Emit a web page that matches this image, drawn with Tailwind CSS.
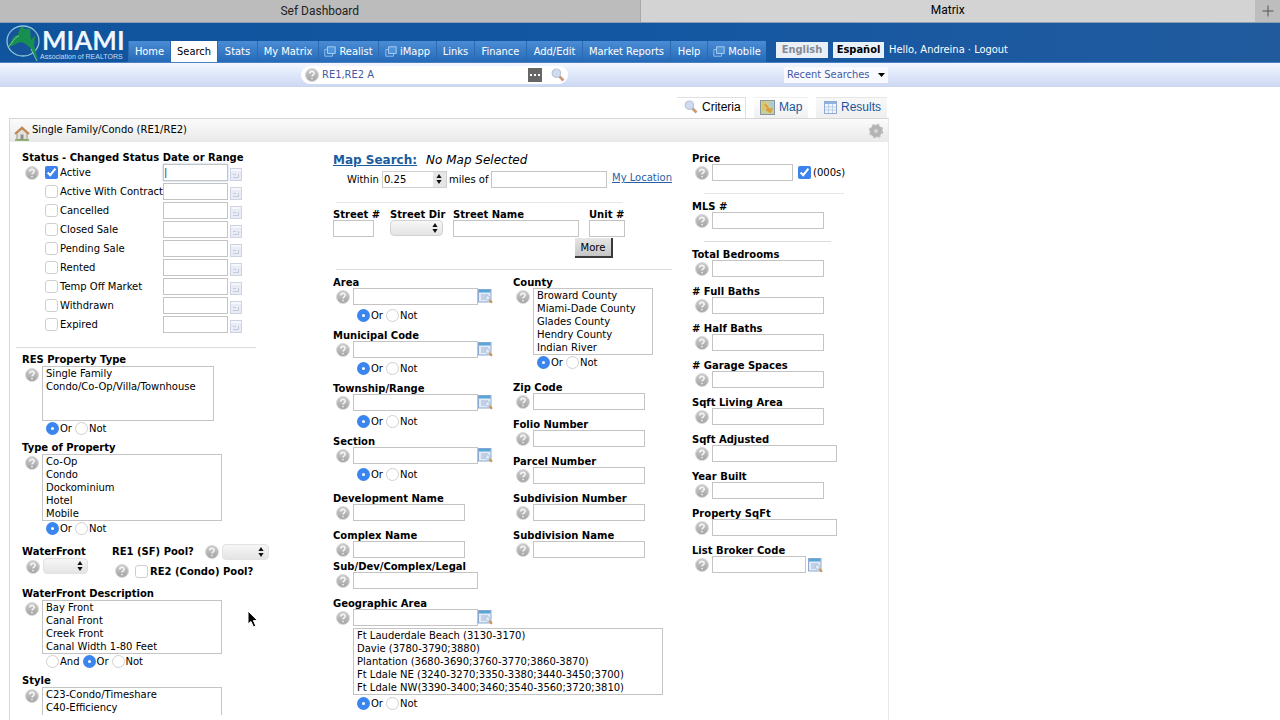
<!DOCTYPE html>
<html lang="en">

<head>
  <meta charset="UTF-8">
  <meta name="viewport" content="width=device-width, initial-scale=1.0">
  <title>Matrix</title>
  <script src="https://cdn.jsdelivr.net/npm/@tailwindcss/browser@4"></script>
</head>

<body class="relative min-h-screen flex flex-col bg-white text-black text-[10px] leading-[13px] font-['DejaVu_Sans',sans-serif] overflow-x-hidden">

  <!-- Shared icons -->
  <svg class="absolute size-0">
    <defs>
      <linearGradient id="helpFill" x1="0" y1="0" x2="0" y2="1">
        <stop offset="0" stop-color="#cccccc" />
        <stop offset="1" stop-color="#a2a2a2" />
      </linearGradient>
    </defs>
    <symbol id="help" viewBox="0 0 14 14">
      <circle cx="7" cy="7" r="6.5" fill="url(#helpFill)" stroke="#d9d9d9" />
      <path d="M4.8 5.4C4.8 2.7 9.3 2.8 9.2 5.3C9.1 6.9 7 6.8 7 8.6M7 9.9V11.3" fill="none" stroke="#f6f6f6" stroke-width="1.6" />
    </symbol>
    <symbol id="lookup" viewBox="0 0 15 15">
      <rect x=".5" y=".5" width="12.5" height="12.5" fill="#e3ebf8" stroke="#8ba9d0" />
      <path d="M1 2.2H12.5" stroke="#58a5d8" stroke-width="2.6" />
      <path d="M3 6H10M3 8H8M3 10H7" stroke="#9fb4d6" />
      <circle cx="9.6" cy="9" r="2.3" fill="#dce9f8" stroke="#b3c1da" />
      <path d="M11.4 11L14 13.8" stroke="#c8954f" stroke-width="2" />
    </symbol>
    <symbol id="calendar" viewBox="0 0 12 13">
      <rect x=".5" y=".5" width="11" height="12" fill="#e9ecf4" stroke="#cdd3e2" />
      <path d="M1 2H11" stroke="#f5f7fc" stroke-width="2" />
      <path d="M3 9.5H8.5V6M3 6.5H6" fill="none" stroke="#c3cadb" />
    </symbol>
    <symbol id="arrows" viewBox="0 0 6 10">
      <path d="M3 0L5.6 4H.4ZM3 10L.4 6H5.6Z" fill="#111" />
    </symbol>
    <symbol id="popup" viewBox="0 0 12 11">
      <path d="M3.5 .8H11.2V7.5H3.5Z" fill="#4f93d8" stroke="#a9cdf2" />
      <path d="M3.5 3.5H.8V10.2H8.5V7.5" fill="none" stroke="#8fbdec" />
    </symbol>
    <symbol id="magnifier" viewBox="0 0 14 14">
      <path d="M8 8L12.5 12.5" stroke="#c69a78" stroke-width="2.6" />
      <circle cx="5.4" cy="5.2" r="4.2" fill="#cddcf1" stroke="#bcc5d6" stroke-width="1.2" />
    </symbol>
  </svg>

  <!-- Browser tabs -->
  <div class="flex h-[23px] border-b border-[#8f9fb4] font-[Roboto,sans-serif] text-[12px] leading-5 text-[#222] text-center">
    <button class="flex-1 bg-[#bcbcbc] border-r border-[#a9a9a9]">Sef Dashboard</button>
    <button class="flex-1 flex bg-[#d3d3d3] text-black">
      <span class="flex-1">Matrix</span>
      <span class="w-[25px] h-full bg-[#bdbdbd] flex items-center justify-center" aria-label="New tab">
        <svg class="size-3" viewBox="0 0 12 12"><path d="M6 .5V11.5M.5 6H11.5" stroke="#555" /></svg>
      </span>
    </button>
  </div>

  <!-- Header -->
  <header class="flex items-end h-10 pl-1 bg-linear-to-r from-[#10549e] via-[#1357a2] to-[#215b9e] border-b border-[#4c7fc0] font-['DejaVu_Sans_Condensed','DejaVu_Sans',sans-serif] text-[11px] text-white">
    <a href="#" class="w-[124px] shrink-0 h-full" aria-label="Miami Association of Realtors">
      <svg class="w-[122px] h-[39px]" viewBox="0 0 122 39">
        <ellipse cx="19" cy="18" rx="16" ry="15" fill="#17539a" stroke="#8cc6d8" stroke-width="1.3" />
        <path d="M4 24C8 17 9 12 14 12C15 5 18 2 20 5C22 8 23 4 26 6L27 17L31 12L30 22L34 37L27 26C22 20 18 18 14 20L8 23Z" fill="#178f50" />
        <path d="M4 24C9 20 10 14 15 13M27 26L33 38" fill="none" stroke="#7cc99b" />
        <text x="38" y="27" font-family="Lato, sans-serif" font-weight="700" font-size="26" fill="#eef6ff">MIAMI</text>
        <text x="36" y="36" font-family="Liberation Sans, sans-serif" font-size="7" fill="#c9dcf2">Association of REALTORS</text>
      </svg>
    </a>
    <nav class="flex h-[21px] leading-5 *:flex *:items-center *:justify-center *:gap-[3px] *:whitespace-nowrap *:bg-linear-to-b *:from-[#4a8cd4] *:to-[#246ab8] *:border-l *:border-[#2b69b0]">
      <a href="#" class="w-[42px]">Home</a>
      <a href="#" class="w-[47px] text-black bg-none! bg-white">Search</a>
      <a href="#" class="w-10">Stats</a>
      <a href="#" class="w-[61px]">My Matrix</a>
      <a href="#" class="w-[60px]"><svg class="w-3 h-[11px]"><use href="#popup" /></svg>Realist</a>
      <a href="#" class="w-[58px]"><svg class="w-3 h-[11px]"><use href="#popup" /></svg>iMapp</a>
      <a href="#" class="w-[38px]">Links</a>
      <a href="#" class="w-[52px]">Finance</a>
      <a href="#" class="w-14">Add/Edit</a>
      <a href="#" class="w-[88px]">Market Reports</a>
      <a href="#" class="w-[37px]">Help</a>
      <a href="#" class="w-[59px]"><svg class="w-3 h-[11px]"><use href="#popup" /></svg>Mobile</a>
    </nav>
    <div class="flex items-center gap-[5px] h-[21px] ml-[10px] pb-1 whitespace-nowrap">
      <button class="w-[52px] h-4 bg-[#e9f0f8] text-[#858b93] font-bold">English</button>
      <button class="w-[51px] h-4 bg-[#e9f2fb] text-black font-bold">Español</button>
      <span>Hello, Andreina · <a href="#">Logout</a></span>
    </div>
  </header>

  <!-- Speed bar -->
  <div class="flex items-center h-6 pl-[301px] border-b border-[#cbd6ea] bg-linear-to-b from-[#f3f7ff] to-[#cdd9f3] text-[11px] text-[#4459a5] font-['DejaVu_Sans_Condensed','DejaVu_Sans',sans-serif]">
    <div class="flex items-center w-[267px] h-[18px] rounded-full bg-white pl-1">
      <svg class="size-[14px]"><use href="#help" /></svg>
      <input type="text" value="RE1,RE2 A" aria-label="Speed bar" class="w-[204px] ml-[3px] outline-none">
      <button class="w-[14px] h-[14px] bg-[#666] flex items-center justify-center ml-[2px]" aria-label="Recent terms">
        <svg class="w-3 h-1" viewBox="0 0 12 4"><path d="M1 1H3V3H1ZM5 1H7V3H5ZM9 1H11V3H9Z" fill="#fff" /></svg>
      </button>
      <button class="ml-[9px]" aria-label="Search"><svg class="size-[14px]"><use href="#magnifier" /></svg></button>
    </div>
    <button class="flex items-center gap-2 ml-[216px] px-[3px] h-4 bg-[#f8faff] whitespace-nowrap">
      Recent Searches
      <svg class="w-[7px] h-1" viewBox="0 0 7 4"><path d="M0 0H7L3.5 4Z" fill="#000" /></svg>
    </button>
  </div>

  <!-- View tabs -->
  <div class="flex justify-end gap-2 w-full max-w-[889px] pt-[10px] pr-[2px] font-['Liberation_Sans',sans-serif] text-[12px] text-[#1a55a0] *:flex *:items-center *:gap-1 *:h-[21px] *:pb-[2px] *:border-t">
    <a href="#" class="w-[69px] pl-[7px] text-black border-r border-[#e0e0e0]"><svg class="size-[14px]"><use href="#magnifier" /></svg>Criteria</a>
    <a href="#" class="w-[54px] pl-[6px] bg-linear-to-b from-white to-[#f0f0f0] border-transparent">
      <svg class="size-[15px]" viewBox="0 0 15 15"><rect x=".5" y=".5" width="14" height="14" fill="#c9cf9c" stroke="#8797a3" /><path d="M2 2L6 1V8L2 12Z" fill="#d8c66c" /><path d="M9 2H13V8L9 5Z" fill="#a9c9db" /><path d="M5 4L11 12M6 9L10 12L12 8" stroke="#d99e39" stroke-width="2" fill="none" /></svg>Map</a>
    <a href="#" class="w-[71px] pl-2 bg-linear-to-b from-[#f8f8f8] to-[#efefef] border-[#e6e6e6]">
      <svg class="w-[13px] h-[13px]" viewBox="0 0 13 13"><rect x=".5" y=".5" width="12" height="12" fill="#f1f6fd" stroke="#8fabd4" /><path d="M1 2H12" stroke="#8fb4e3" stroke-width="2" /><path d="M1 6H12M1 9H12M4.5 3V12M8.5 3V12" stroke="#bccde6" /></svg>Results</a>
  </div>

  <!-- Criteria panel -->
  <main class="flex-1 w-full max-w-[880px] ml-[9px] border-x border-t border-[#d6d6d6] border-r-[#e9e9e9]">
    <div class="flex items-center h-[23px] px-1 bg-linear-to-b from-[#fbfbfb] to-[#e9e9e9]">
      <svg class="size-4 mt-1" viewBox="0 0 16 16">
        <path d="M3 8L8 4L13 8V14.5H3Z" fill="#e6e1da" stroke="#9f968c" />
        <path d="M1 9L8 2.5L15 9" fill="none" stroke="#c28749" stroke-width="2" />
        <path d="M6.5 9.5H9.5V14H6.5Z" fill="#8c8f98" />
        <path d="M1 15H15" stroke="#7ea35d" stroke-width="1.5" />
      </svg>
      <h1 class="flex-1 pl-[2px] pb-[3px]">Single Family/Condo (RE1/RE2)</h1>
      <button aria-label="Settings"><svg class="size-4" viewBox="0 0 16 16">
          <circle cx="8" cy="8" r="6" fill="#b5b5b5" stroke="#bdbdbd" stroke-width="2.5" stroke-dasharray="2.7 2" />
          <circle cx="8" cy="8" r="5.5" fill="#b3b3b3" />
          <circle cx="8" cy="8" r="2" fill="#d6d6d6" />
        </svg></button>
    </div>

    <form class="grid grid-cols-[311px_359px_1fr] pl-3 pt-[10px]
      [&_svg]:shrink-0 [&_input]:shrink-0
      [&_input[type=text]]:h-[17px] [&_input[type=text]]:border [&_input[type=text]]:border-[#c4c4c4] [&_input[type=text]]:bg-white [&_input[type=text]]:outline-none
      [&_input[type=checkbox]]:size-[13px] [&_input[type=checkbox]]:appearance-none [&_input[type=checkbox]]:border [&_input[type=checkbox]]:border-[#cfcfcf] [&_input[type=checkbox]]:rounded-[3px] [&_input[type=checkbox]:checked]:appearance-auto [&_input[type=checkbox]]:accent-[#3b82ec]
      [&_input[type=radio]]:size-[13px] [&_input[type=radio]]:appearance-none [&_input[type=radio]]:rounded-full [&_input[type=radio]]:border [&_input[type=radio]]:border-[#d0d0d0] [&_input[type=radio]:checked]:border-5 [&_input[type=radio]:checked]:border-[#3b86ee]
      [&_fieldset]:flex [&_fieldset]:gap-[3px] [&_fieldset]:pl-6 [&_fieldset]:h-[13px] [&_fieldset_label]:flex [&_fieldset_label]:gap-px
      [&_select[multiple]]:border [&_select[multiple]]:border-[#c4c4c4] [&_select[multiple]]:overflow-hidden [&_select[multiple]]:pt-px [&_select[multiple]]:pl-[3px] [&_option]:h-[13px] [&_option]:min-h-0 [&_option]:p-0 [&_option]:leading-[13px]">

      <!-- Left column -->
      <div>
        <h2 class="font-bold h-3 leading-3">Status - Changed Status Date or Range</h2>
        <div class="flex">
          <svg class="size-[14px] mx-[3px] mt-[2px]"><use href="#help" /></svg>
          <div class="grid grid-cols-[118px_auto] auto-rows-[19px] pl-[3px] [&>label]:flex [&>label]:gap-[2px] [&>label]:pt-[2px] [&>label]:whitespace-nowrap [&>div]:flex [&>div]:gap-[2px] [&_input[type=text]]:w-[65px] [&_svg]:w-3 [&_svg]:h-[13px] [&_svg]:mt-1">
            <label><input type="checkbox" checked>Active</label>
            <div><input type="text" aria-label="Active date" value="|" class="leading-3 text-[#333] shadow-[0_0_2px_#a9c4e4]"><svg><use href="#calendar" /></svg></div>
            <label><input type="checkbox">Active With Contract</label>
            <div><input type="text" aria-label="Active With Contract date"><svg><use href="#calendar" /></svg></div>
            <label><input type="checkbox">Cancelled</label>
            <div><input type="text" aria-label="Cancelled date"><svg><use href="#calendar" /></svg></div>
            <label><input type="checkbox">Closed Sale</label>
            <div><input type="text" aria-label="Closed Sale date"><svg><use href="#calendar" /></svg></div>
            <label><input type="checkbox">Pending Sale</label>
            <div><input type="text" aria-label="Pending Sale date"><svg><use href="#calendar" /></svg></div>
            <label><input type="checkbox">Rented</label>
            <div><input type="text" aria-label="Rented date"><svg><use href="#calendar" /></svg></div>
            <label><input type="checkbox">Temp Off Market</label>
            <div><input type="text" aria-label="Temp Off Market date"><svg><use href="#calendar" /></svg></div>
            <label><input type="checkbox">Withdrawn</label>
            <div><input type="text" aria-label="Withdrawn date"><svg><use href="#calendar" /></svg></div>
            <label><input type="checkbox">Expired</label>
            <div><input type="text" aria-label="Expired date"><svg><use href="#calendar" /></svg></div>
          </div>
        </div>

        <hr class="w-[240px] -ml-[6px] mt-3 mb-[6px] border-[#dcdcdc]">

        <label for="resType" class="block font-bold h-3 leading-3">RES Property Type</label>
        <div class="flex">
          <svg class="size-[14px] mx-[3px] mt-[2px]"><use href="#help" /></svg>
          <select id="resType" multiple class="w-[172px] h-[55px]">
            <option>Single Family</option>
            <option>Condo/Co-Op/Villa/Townhouse</option>
          </select>
        </div>
        <fieldset class="mt-px">
          <label><input type="radio" name="resOp" checked>Or</label>
          <label><input type="radio" name="resOp">Not</label>
        </fieldset>

        <label for="propType" class="block font-bold h-3 leading-3 mt-[7px]">Type of Property</label>
        <div class="flex">
          <svg class="size-[14px] mx-[3px] mt-[2px]"><use href="#help" /></svg>
          <select id="propType" multiple class="w-[180px] h-[67px]">
            <option>Co-Op</option>
            <option>Condo</option>
            <option>Dockominium</option>
            <option>Hotel</option>
            <option>Mobile</option>
          </select>
        </div>
        <fieldset class="mt-px">
          <label><input type="radio" name="propOp" checked>Or</label>
          <label><input type="radio" name="propOp">Not</label>
        </fieldset>

        <div class="flex mt-2 h-[45px] font-bold whitespace-nowrap">
          <div class="w-[90px] pt-[3px]">
            <label for="waterfront" class="block h-3 leading-3">WaterFront</label>
            <div class="flex pl-px">
              <svg class="size-[14px] mx-[3px] mt-[2px]"><use href="#help" /></svg>
              <div class="relative">
                <select id="waterfront" class="appearance-none w-[45px] h-4 rounded-sm bg-linear-to-b from-[#f7f7f7] to-[#e4e4e4] border border-[#e2e2e2]"></select>
                <svg class="absolute right-[5px] top-[3px] w-[6px] h-[10px] pointer-events-none"><use href="#arrows" /></svg>
              </div>
            </div>
          </div>
          <div>
            <div class="flex items-center h-[17px]">
              <label for="sfPool" class="w-[90px]">RE1 (SF) Pool?</label>
              <svg class="size-[14px] mx-[3px]"><use href="#help" /></svg>
              <div class="relative">
                <select id="sfPool" class="appearance-none block w-[47px] h-4 rounded-sm bg-linear-to-b from-[#f7f7f7] to-[#e4e4e4] border border-[#e2e2e2]"></select>
                <svg class="absolute right-[5px] top-[3px] w-[6px] h-[10px] pointer-events-none"><use href="#arrows" /></svg>
              </div>
            </div>
            <div class="flex items-center h-5 pt-[2px] pl-[3px]">
              <svg class="size-[14px]"><use href="#help" /></svg>
              <label class="flex gap-[2px] pl-[6px]"><input type="checkbox">RE2 (Condo) Pool?</label>
            </div>
          </div>
        </div>

        <label for="waterDesc" class="block font-bold h-3 leading-3">WaterFront Description</label>
        <div class="flex">
          <svg class="size-[14px] mx-[3px] mt-[2px]"><use href="#help" /></svg>
          <select id="waterDesc" multiple class="w-[180px] h-[54px]">
            <option>Bay Front</option>
            <option>Canal Front</option>
            <option>Creek Front</option>
            <option>Canal Width 1-80 Feet</option>
          </select>
        </div>
        <fieldset class="mt-px">
          <label><input type="radio" name="waterOp">And</label>
          <label><input type="radio" name="waterOp" checked>Or</label>
          <label><input type="radio" name="waterOp">Not</label>
        </fieldset>

        <label for="style" class="block font-bold h-3 leading-3 mt-[7px]">Style</label>
        <div class="flex">
          <svg class="size-[14px] mx-[3px] mt-[2px]"><use href="#help" /></svg>
          <select id="style" multiple class="w-[180px] h-7 border-b-0!">
            <option>C23-Condo/Timeshare</option>
            <option>C40-Efficiency</option>
          </select>
        </div>
      </div>

      <!-- Middle column -->
      <div>
        <div class="flex gap-[9px] h-[18px] text-[12px] leading-4">
          <a href="#" class="font-bold underline text-[#1b5c9e]">Map Search:</a>
          <span class="italic">No Map Selected</span>
        </div>
        <div class="flex items-center h-[19px] pl-[14px] whitespace-nowrap">
          <label for="radius" class="w-[35px]">Within</label>
          <div class="relative">
            <select id="radius" class="appearance-none block w-[65px] h-[17px] pl-px border border-[#cfcfcf] bg-linear-to-r from-white from-80% to-[#e6e6e6] to-80%"><option>0.25</option></select>
            <svg class="absolute right-[5px] top-[3px] w-[6px] h-[10px] pointer-events-none"><use href="#arrows" /></svg>
          </div>
          <label for="milesOf" class="w-11 pl-[2px]">miles of</label>
          <input id="milesOf" type="text" class="w-[116px]">
          <a href="#" class="pl-[5px] -mt-1 underline text-[#2a60a8]">My Location</a>
        </div>

        <hr class="w-[287px] ml-[3px] mt-[13px] border-[#e6e6e6]">

        <div class="flex mt-[5px] [&_label]:block [&_label]:h-3 [&_label]:leading-[13px] [&_label]:font-bold [&_label]:whitespace-nowrap">
          <div class="w-[57px]"><label for="streetNo">Street #</label><input id="streetNo" type="text" class="w-[41px]"></div>
          <div class="w-[63px]">
            <label for="streetDir">Street Dir</label>
            <div class="relative w-[53px]">
              <select id="streetDir" class="appearance-none block w-full h-4 rounded-sm bg-linear-to-b from-[#f7f7f7] to-[#e4e4e4] border border-[#d2d2d2]"></select>
              <svg class="absolute right-[5px] top-[3px] w-[6px] h-[10px] pointer-events-none"><use href="#arrows" /></svg>
            </div>
          </div>
          <div class="w-[136px]"><label for="streetName">Street Name</label><input id="streetName" type="text" class="w-[126px]"></div>
          <div><label for="unit">Unit #</label><input id="unit" type="text" class="w-9"></div>
        </div>
        <button type="button" class="block w-[38px] h-5 ml-[242px] mt-px bg-linear-to-b from-[#e6e6e6] to-[#c6c6c6] border-r-2 border-b-2 border-[#3a3a3a]">More</button>

        <hr class="w-[336px] ml-[3px] mt-[11px] mb-[6px] border-[#dcdcdc]">

        <div class="grid grid-cols-[180px_1fr] [&_label[for]]:block [&_label[for]]:h-3 [&_label[for]]:leading-[13px] [&_label[for]]:font-bold [&_label[for]]:whitespace-nowrap">
          <div>
            <label for="area">Area</label>
            <div class="flex">
              <svg class="size-[14px] mx-[3px] mt-[2px]"><use href="#help" /></svg>
              <input id="area" type="text" class="w-[125px]">
              <svg class="size-[15px] mt-px"><use href="#lookup" /></svg>
            </div>
            <fieldset class="mt-1 mb-[7px]">
              <label><input type="radio" name="areaOp" checked>Or</label>
              <label><input type="radio" name="areaOp">Not</label>
            </fieldset>
            <label for="municipal">Municipal Code</label>
            <div class="flex">
              <svg class="size-[14px] mx-[3px] mt-[2px]"><use href="#help" /></svg>
              <input id="municipal" type="text" class="w-[125px]">
              <svg class="size-[15px] mt-px"><use href="#lookup" /></svg>
            </div>
            <fieldset class="mt-1 mb-[7px]">
              <label><input type="radio" name="munOp" checked>Or</label>
              <label><input type="radio" name="munOp">Not</label>
            </fieldset>
            <label for="township">Township/Range</label>
            <div class="flex">
              <svg class="size-[14px] mx-[3px] mt-[2px]"><use href="#help" /></svg>
              <input id="township" type="text" class="w-[125px]">
              <svg class="size-[15px] mt-px"><use href="#lookup" /></svg>
            </div>
            <fieldset class="mt-1 mb-[7px]">
              <label><input type="radio" name="townOp" checked>Or</label>
              <label><input type="radio" name="townOp">Not</label>
            </fieldset>
            <label for="section">Section</label>
            <div class="flex">
              <svg class="size-[14px] mx-[3px] mt-[2px]"><use href="#help" /></svg>
              <input id="section" type="text" class="w-[125px]">
              <svg class="size-[15px] mt-px"><use href="#lookup" /></svg>
            </div>
            <fieldset class="mt-1 mb-[11px]">
              <label><input type="radio" name="secOp" checked>Or</label>
              <label><input type="radio" name="secOp">Not</label>
            </fieldset>
            <label for="devName">Development Name</label>
            <div class="flex mb-2">
              <svg class="size-[14px] mx-[3px] mt-[2px]"><use href="#help" /></svg>
              <input id="devName" type="text" class="w-28">
            </div>
            <label for="complexName">Complex Name</label>
            <div class="flex mb-[2px]">
              <svg class="size-[14px] mx-[3px] mt-[2px]"><use href="#help" /></svg>
              <input id="complexName" type="text" class="w-28">
            </div>
            <label for="legal">Sub/Dev/Complex/Legal</label>
            <div class="flex mb-2">
              <svg class="size-[14px] mx-[3px] mt-[2px]"><use href="#help" /></svg>
              <input id="legal" type="text" class="w-[125px]">
            </div>
          </div>

          <div>
            <label for="county">County</label>
            <div class="flex">
              <svg class="size-[14px] mx-[3px] mt-[2px]"><use href="#help" /></svg>
              <select id="county" multiple class="w-[120px] h-[67px]">
                <option>Broward County</option>
                <option>Miami-Dade County</option>
                <option>Glades County</option>
                <option>Hendry County</option>
                <option>Indian River</option>
              </select>
            </div>
            <fieldset class="mt-px mb-3">
              <label><input type="radio" name="countyOp" checked>Or</label>
              <label><input type="radio" name="countyOp">Not</label>
            </fieldset>
            <label for="zip">Zip Code</label>
            <div class="flex mb-2">
              <svg class="size-[14px] mx-[3px] mt-[2px]"><use href="#help" /></svg>
              <input id="zip" type="text" class="w-28">
            </div>
            <label for="folio">Folio Number</label>
            <div class="flex mb-2">
              <svg class="size-[14px] mx-[3px] mt-[2px]"><use href="#help" /></svg>
              <input id="folio" type="text" class="w-28">
            </div>
            <label for="parcel">Parcel Number</label>
            <div class="flex mb-2">
              <svg class="size-[14px] mx-[3px] mt-[2px]"><use href="#help" /></svg>
              <input id="parcel" type="text" class="w-28">
            </div>
            <label for="subNo">Subdivision Number</label>
            <div class="flex mb-2">
              <svg class="size-[14px] mx-[3px] mt-[2px]"><use href="#help" /></svg>
              <input id="subNo" type="text" class="w-28">
            </div>
            <label for="subName">Subdivision Name</label>
            <div class="flex">
              <svg class="size-[14px] mx-[3px] mt-[2px]"><use href="#help" /></svg>
              <input id="subName" type="text" class="w-28">
            </div>
          </div>
        </div>

        <label for="geo" class="block font-bold h-3 leading-[13px]">Geographic Area</label>
        <div class="flex">
          <svg class="size-[14px] mx-[3px] mt-[2px]"><use href="#help" /></svg>
          <input id="geo" type="text" class="w-[125px]">
          <svg class="size-[15px] mt-px"><use href="#lookup" /></svg>
        </div>
        <select multiple aria-label="Geographic Area list" class="block w-[310px] h-[67px] ml-5 mt-[2px]">
          <option>Ft Lauderdale Beach (3130-3170)</option>
          <option>Davie (3780-3790;3880)</option>
          <option>Plantation (3680-3690;3760-3770;3860-3870)</option>
          <option>Ft Ldale NE (3240-3270;3350-3380;3440-3450;3700)</option>
          <option>Ft Ldale NW(3390-3400;3460;3540-3560;3720;3810)</option>
        </select>
        <fieldset class="mt-[2px]">
          <label><input type="radio" name="geoOp" checked>Or</label>
          <label><input type="radio" name="geoOp">Not</label>
        </fieldset>
      </div>

      <!-- Right column -->
      <div class="[&_label[for]]:block [&_label[for]]:h-3 [&_label[for]]:leading-[13px] [&_label[for]]:font-bold">
        <label for="price">Price</label>
        <div class="flex">
          <svg class="size-[14px] mx-[3px] mt-[2px]"><use href="#help" /></svg>
          <input id="price" type="text" class="w-[81px]">
          <label class="flex gap-[2px] pl-[5px] pt-[2px]"><input type="checkbox" checked>(000s)</label>
        </div>
        <hr class="w-[140px] ml-3 mt-3 mb-[6px] border-[#e6e6e6]">
        <label for="mls">MLS #</label>
        <div class="flex">
          <svg class="size-[14px] mx-[3px] mt-[2px]"><use href="#help" /></svg>
          <input id="mls" type="text" class="w-28">
        </div>
        <hr class="w-[127px] ml-3 mt-3 mb-[6px] border-[#dcdcdc]">
        <label for="beds">Total Bedrooms</label>
        <div class="flex mb-2">
          <svg class="size-[14px] mx-[3px] mt-[2px]"><use href="#help" /></svg>
          <input id="beds" type="text" class="w-28">
        </div>
        <label for="fullBaths"># Full Baths</label>
        <div class="flex mb-2">
          <svg class="size-[14px] mx-[3px] mt-[2px]"><use href="#help" /></svg>
          <input id="fullBaths" type="text" class="w-28">
        </div>
        <label for="halfBaths"># Half Baths</label>
        <div class="flex mb-2">
          <svg class="size-[14px] mx-[3px] mt-[2px]"><use href="#help" /></svg>
          <input id="halfBaths" type="text" class="w-28">
        </div>
        <label for="garage"># Garage Spaces</label>
        <div class="flex mb-2">
          <svg class="size-[14px] mx-[3px] mt-[2px]"><use href="#help" /></svg>
          <input id="garage" type="text" class="w-28">
        </div>
        <label for="living">Sqft Living Area</label>
        <div class="flex mb-2">
          <svg class="size-[14px] mx-[3px] mt-[2px]"><use href="#help" /></svg>
          <input id="living" type="text" class="w-28">
        </div>
        <label for="adjusted">Sqft Adjusted</label>
        <div class="flex mb-2">
          <svg class="size-[14px] mx-[3px] mt-[2px]"><use href="#help" /></svg>
          <input id="adjusted" type="text" class="w-[125px]">
        </div>
        <label for="year">Year Built</label>
        <div class="flex mb-2">
          <svg class="size-[14px] mx-[3px] mt-[2px]"><use href="#help" /></svg>
          <input id="year" type="text" class="w-28">
        </div>
        <label for="propSqft">Property SqFt</label>
        <div class="flex mb-2">
          <svg class="size-[14px] mx-[3px] mt-[2px]"><use href="#help" /></svg>
          <input id="propSqft" type="text" class="w-[125px]">
        </div>
        <label for="broker">List Broker Code</label>
        <div class="flex">
          <svg class="size-[14px] mx-[3px] mt-[2px]"><use href="#help" /></svg>
          <input id="broker" type="text" class="w-[94px]">
          <svg class="size-[15px] ml-[2px] mt-[2px]"><use href="#lookup" /></svg>
        </div>
      </div>
    </form>
  </main>

  <!-- Mouse pointer -->
  <svg class="absolute left-[247px] top-[610px] w-3 h-[18px] pointer-events-none" viewBox="0 0 12 18">
    <path d="M1 1V14L4 11.5L6.5 17L8.8 16L6.4 10.6H10.5Z" fill="#000" stroke="#fff" />
  </svg>

</body>

</html>
